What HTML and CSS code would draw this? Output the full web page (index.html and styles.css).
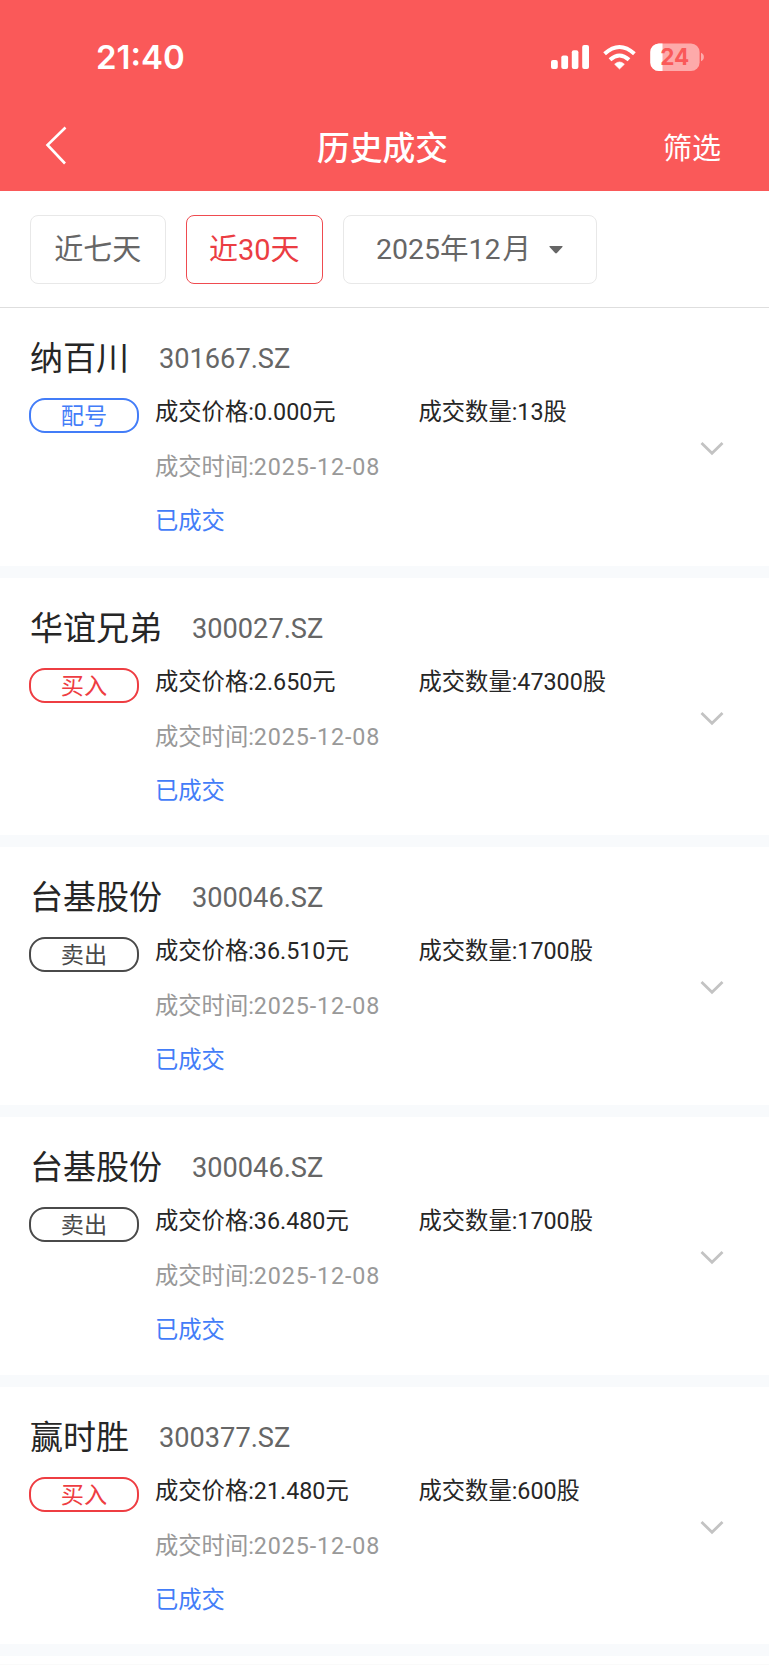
FILE: index.html
```html
<!DOCTYPE html>
<html lang="zh-CN">
<head>
<meta charset="utf-8">
<title>历史成交</title>
<link rel="stylesheet" href="styles.css">
</head>
<body>
<header class="header">
  <div class="status-bar">
    <span class="clock">21:40</span>
    <svg class="status-icons" width="160" height="36" viewBox="0 0 160 36">
      <g fill="#fff">
        <rect x="1" y="20" width="6.8" height="9" rx="2"/>
        <rect x="11.3" y="15.5" width="6.8" height="13.5" rx="2"/>
        <rect x="21.8" y="10.2" width="6.6" height="18.8" rx="2"/>
        <rect x="32.2" y="5" width="6.8" height="24" rx="2"/>
        <path d="M69.5 29 L64.6 24.2 Q69.5 19.7 74.4 24.2 Z" stroke="#fff" stroke-width=".6" stroke-linejoin="round"/>
      </g>
      <g fill="none" stroke="#fff" stroke-width="4">
        <path d="M54.6 13.8 Q69.5 0.2 84.4 13.8"/>
        <path d="M60 19.8 Q69.5 11.2 79 19.8"/>
      </g>
      <clipPath id="battery-body"><rect x="100.3" y="3.5" width="49.3" height="27.5" rx="8.6"/></clipPath>
      <g clip-path="url(#battery-body)">
        <rect x="100" y="3" width="50" height="28" fill="#fdaaaa"/>
        <rect x="100" y="3" width="12.5" height="28" fill="#fff"/>
      </g>
      <path d="M151 12.8 Q153.9 14 153.9 17 T151 21.2 Z" fill="#fdaaaa"/>
      <text class="battery-text" x="124.8" y="25.4">24</text>
    </svg>
  </div>
  <nav class="nav">
    <svg class="back" width="24" height="42" viewBox="0 0 24 42"><path d="M21.5 3.5 L3.5 21 L21 39.5" fill="none" stroke="#fff" stroke-width="2.6"/></svg>
    <h1 class="title">历史成交</h1>
    <span class="nav-action">筛选</span>
  </nav>
</header>
<section class="filters">
  <span class="chip">近七天</span>
  <span class="chip chip-active">近30天</span>
  <span class="chip chip-month"><span class="month">2025年12<span class="unit">月</span></span><svg width="14" height="8" viewBox="0 0 14 8"><path d="M.8 0H13.2Q14 .2 13.4 .9L7.9 7.1Q7 8 6.1 7.1L.6 .9Q0 .2 .8 0Z" fill="#666"/></svg></span>
</section>
<main class="list">
  <article class="trade">
    <div class="trade-head"><h2 class="name">纳百川</h2><span class="code">301667.SZ</span></div>
    <div class="trade-body">
      <span class="tag tag-allot">配号</span>
      <div class="details">
        <div class="row"><span class="price">成交价格:0.000元</span><span>成交数量:13股</span></div>
        <div class="time">成交时间:<span class="date">2025-12-08</span></div>
        <div class="state">已成交</div>
      </div>
      <svg class="arrow" width="24" height="16" viewBox="0 0 24 16"><path d="M1.5 2L12 12.2L22.5 2" fill="none" stroke="#c3c3c3" stroke-width="2.8"/></svg>
    </div>
  </article>
  <article class="trade">
    <div class="trade-head"><h2 class="name">华谊兄弟</h2><span class="code">300027.SZ</span></div>
    <div class="trade-body">
      <span class="tag tag-buy">买入</span>
      <div class="details">
        <div class="row"><span class="price">成交价格:2.650元</span><span>成交数量:47300股</span></div>
        <div class="time">成交时间:<span class="date">2025-12-08</span></div>
        <div class="state">已成交</div>
      </div>
      <svg class="arrow" width="24" height="16" viewBox="0 0 24 16"><path d="M1.5 2L12 12.2L22.5 2" fill="none" stroke="#c3c3c3" stroke-width="2.8"/></svg>
    </div>
  </article>
  <article class="trade">
    <div class="trade-head"><h2 class="name">台基股份</h2><span class="code">300046.SZ</span></div>
    <div class="trade-body">
      <span class="tag tag-sell">卖出</span>
      <div class="details">
        <div class="row"><span class="price">成交价格:36.510元</span><span>成交数量:1700股</span></div>
        <div class="time">成交时间:<span class="date">2025-12-08</span></div>
        <div class="state">已成交</div>
      </div>
      <svg class="arrow" width="24" height="16" viewBox="0 0 24 16"><path d="M1.5 2L12 12.2L22.5 2" fill="none" stroke="#c3c3c3" stroke-width="2.8"/></svg>
    </div>
  </article>
  <article class="trade">
    <div class="trade-head"><h2 class="name">台基股份</h2><span class="code">300046.SZ</span></div>
    <div class="trade-body">
      <span class="tag tag-sell">卖出</span>
      <div class="details">
        <div class="row"><span class="price">成交价格:36.480元</span><span>成交数量:1700股</span></div>
        <div class="time">成交时间:<span class="date">2025-12-08</span></div>
        <div class="state">已成交</div>
      </div>
      <svg class="arrow" width="24" height="16" viewBox="0 0 24 16"><path d="M1.5 2L12 12.2L22.5 2" fill="none" stroke="#c3c3c3" stroke-width="2.8"/></svg>
    </div>
  </article>
  <article class="trade">
    <div class="trade-head"><h2 class="name">赢时胜</h2><span class="code">300377.SZ</span></div>
    <div class="trade-body">
      <span class="tag tag-buy">买入</span>
      <div class="details">
        <div class="row"><span class="price">成交价格:21.480元</span><span>成交数量:600股</span></div>
        <div class="time">成交时间:<span class="date">2025-12-08</span></div>
        <div class="state">已成交</div>
      </div>
      <svg class="arrow" width="24" height="16" viewBox="0 0 24 16"><path d="M1.5 2L12 12.2L22.5 2" fill="none" stroke="#c3c3c3" stroke-width="2.8"/></svg>
    </div>
  </article>
</main>
</body>
</html>
```
FILE: styles.css
```css
* { box-sizing: border-box; }
body {
  margin: 0;
  height: 1665px;
  overflow: hidden;
  background: #fff;
  border-bottom: 1px solid #fafafa;
  color: #262626;
  font-family: Roboto, "Noto Sans CJK SC", sans-serif;
}
h1, h2 { margin: 0; font-weight: 400; }
svg { display: block; flex: none; }

.header { height: 191px; background: #fa5959; color: #fff; }
.status-bar {
  display: flex;
  justify-content: space-between;
  height: 104px;
  padding: 39px 59px 0 96px;
}
.clock { font: 600 33px/36px Inter, sans-serif; }
.status-icons { margin-top: 1px; }
.battery-text { font: 700 22.5px Inter, sans-serif; fill: #fa5959; text-anchor: middle; }
.nav {
  display: grid;
  grid-template-columns: 1fr auto 1fr;
  align-items: center;
  height: 87px;
  padding: 2px 48px 0 44px;
}
.back { margin-bottom: 8px; }
.title { font-size: 32.8px; font-weight: 500; line-height: 44px; }
.nav-action { justify-self: end; font-size: 29px; line-height: 44px; }

.filters {
  display: flex;
  gap: 20px;
  height: 117px;
  padding: 24px 29px 0 29.5px;
  background: #fff;
  border-bottom: 1px solid #dedede;
}
.chip {
  display: flex;
  align-items: center;
  justify-content: center;
  width: 136.5px;
  height: 69px;
  border: 1px solid #e8e8e8;
  border-radius: 8px;
  color: #666;
  font-size: 29px;
  line-height: 44px;
}
.chip-active { border-color: #ef4b50; color: #eb3d43; }
.chip-month { width: 254px; gap: 18px; }
.unit { margin-left: 2px; }
.month { font-size: 28.5px; }

.trade {
  height: 269.7px;
  padding: 29px 45px 0 30px;
  background: #fff;
  border-bottom: 12px solid #f8fafc;
}
.trade-head { display: flex; align-items: center; gap: 30px; height: 44px; }
.name { font-size: 33px; line-height: 44px; }
.code { color: #666; font-size: 27.2px; line-height: 44px; }
.trade-body { display: flex; align-items: flex-start; padding-top: 10px; }
.tag {
  flex: none;
  width: 110px;
  height: 35px;
  margin: 7px 16px 0 -1px;
  border: 2px solid;
  border-radius: 16px;
  font-size: 23.2px;
  line-height: 32px;
  text-align: center;
}
.tag-allot { color: #437df8; }
.tag-buy { color: #ee3d42; }
.tag-sell { color: #4a4a4a; }
.details { flex: 1; font-size: 23.3px; line-height: 32px; }
.row { display: flex; margin-top: 5px; }
.price { width: 263.5px; }
.time { margin-top: 23px; color: #999; }
.date { letter-spacing: .87px; }
.state { margin-top: 22px; color: #437df8; }
.arrow { margin-top: 50px; }
```
